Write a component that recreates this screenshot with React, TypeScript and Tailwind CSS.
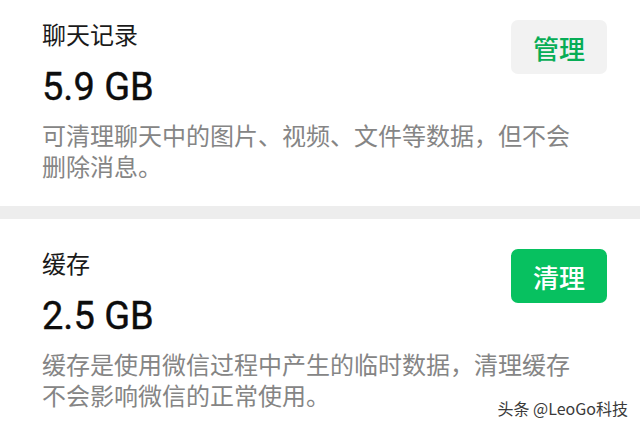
const cjk = "font-['Noto_Sans_CJK_SC',sans-serif]";

function StorageSection({
  title,
  size,
  lines,
  action,
  primary,
  top,
}: {
  title: string;
  size: string;
  lines: string[];
  action: string;
  primary?: boolean;
  top: string;
}) {
  return (
    <section className={`bg-white pl-[42px] pr-[33px] ${top} pb-[25px]`}>
      <div className="flex items-start justify-between">
        <div>
          <h2 className={`${cjk} text-[24px] leading-[32px] text-[#1a1a1a]`}>{title}</h2>
          <p className="mt-[15px] font-['Roboto',sans-serif] text-[38px] leading-[44px] text-[#0d0d0d] [-webkit-text-stroke:0.4px_#0d0d0d]">
            {size}
          </p>
        </div>
        <button
          className={`${cjk} mt-[2px] h-[54px] w-[96px] rounded-[7px] text-[26px] font-medium ${
            primary ? "bg-[#07c160] text-white" : "bg-[#f2f2f2] text-[#07ad56]"
          }`}
        >
          {action}
        </button>
      </div>
      <div className={`${cjk} mt-[10px] text-[24px] leading-[31px] text-[#858585]`}>
        {lines.map((line) => (
          <p key={line}>{line}</p>
        ))}
      </div>
    </section>
  );
}

export default function App() {
  return (
    <div className="relative h-[426px] w-[640px] overflow-hidden bg-white">
      <StorageSection
        top="pt-[18px]"
        title="聊天记录"
        size="5.9 GB"
        lines={["可清理聊天中的图片、视频、文件等数据，但不会", "删除消息。"]}
        action="管理"
      />
      <div className="h-[13px] bg-[#ededed]" />
      <StorageSection
        top="pt-[28px]"
        title="缓存"
        size="2.5 GB"
        lines={["缓存是使用微信过程中产生的临时数据，清理缓存", "不会影响微信的正常使用。"]}
        action="清理"
        primary
      />

      {/* watermark */}
      <div
        className={`${cjk} absolute bottom-[8px] right-[12px] text-[16px] leading-[20px] text-[#3a3a3a] [text-shadow:0_0_2px_#fff,0_0_2px_#fff]`}
      >
        头条 @LeoGo科技
      </div>
    </div>
  );
}
